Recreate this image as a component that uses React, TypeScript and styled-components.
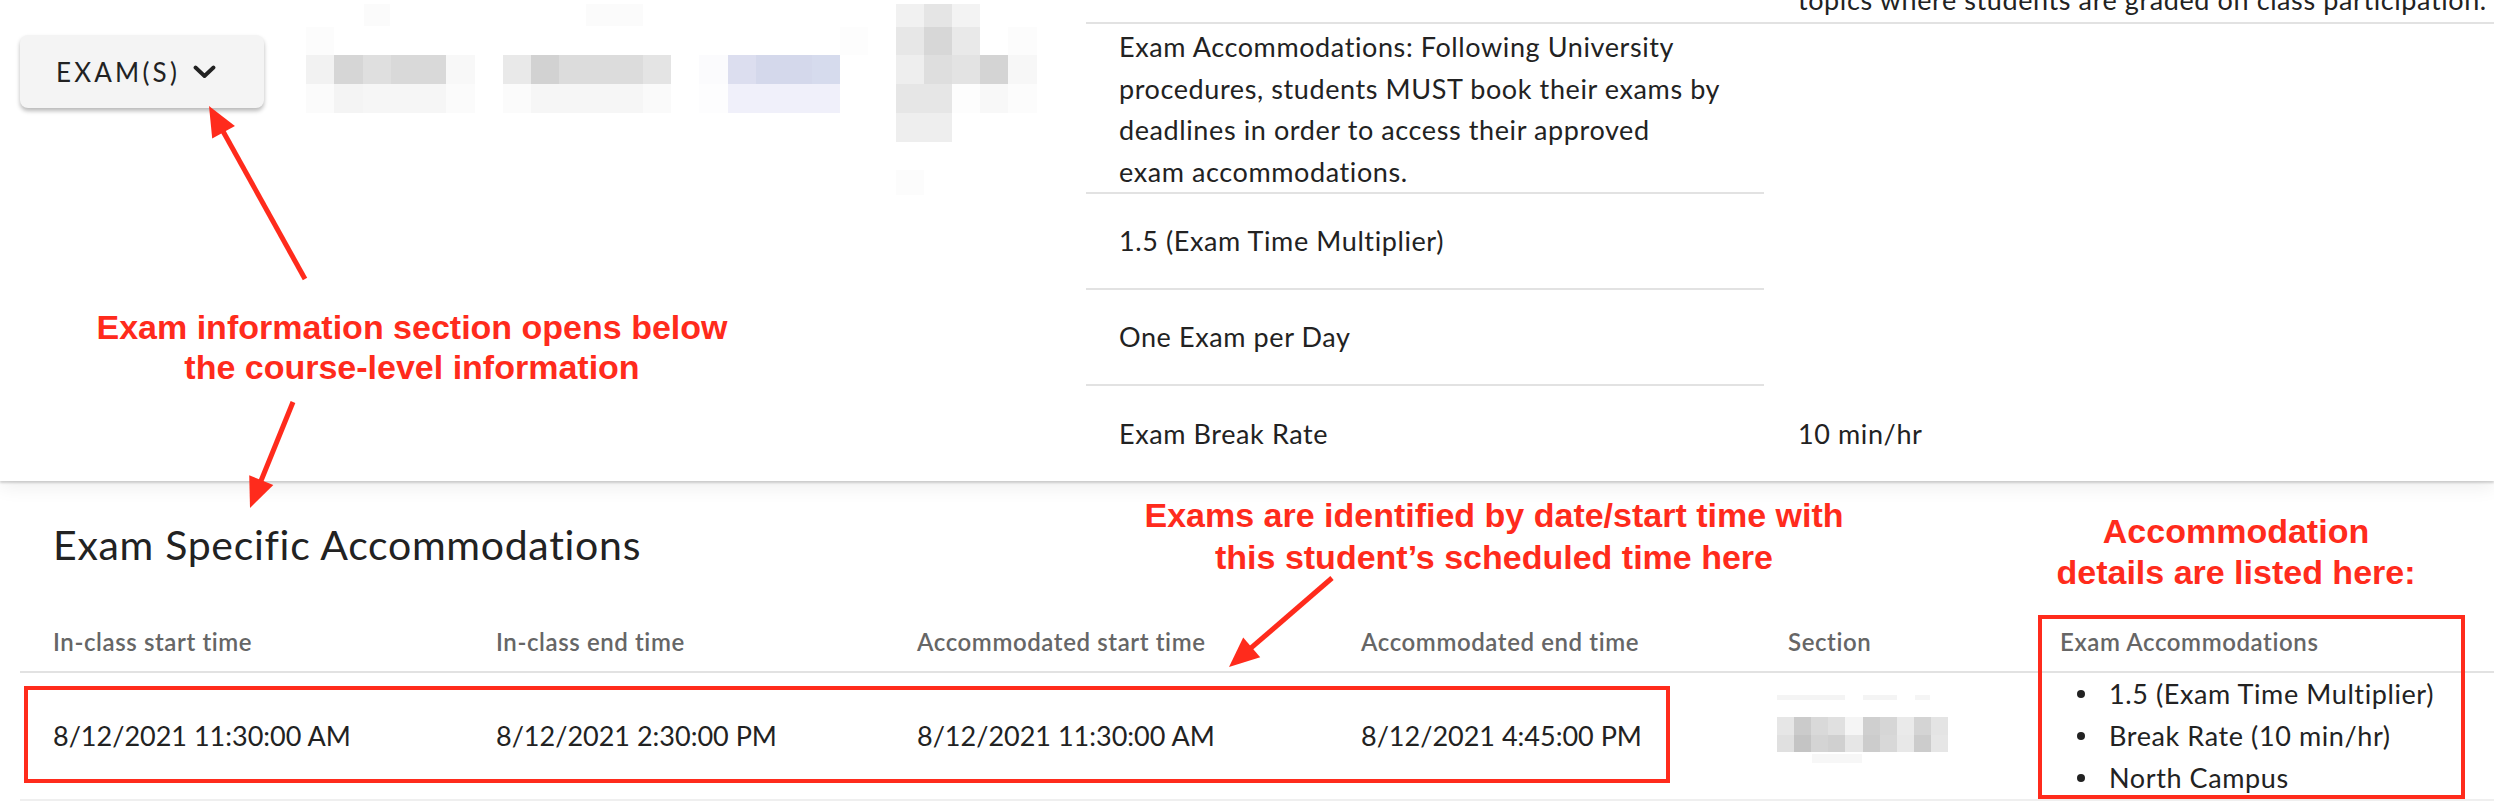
import React from 'react';
import styled, { createGlobalStyle } from 'styled-components';

const GlobalStyle = createGlobalStyle`
  html, body {
    margin: 0;
    padding: 0;
    background: #ffffff;
  }
  body {
    font-family: Lato, "Open Sans", "Liberation Sans", sans-serif;
    color: #222222;
  }
`;

const RED = '#ff2b1c';

const Page = styled.div`
  position: relative;
  width: 2494px;
  height: 804px;
  overflow: hidden;
  background: #ffffff;
`;

/* ---------- top panel (course level info) ---------- */

const TopPanel = styled.div`
  position: relative;
  z-index: 1;
  display: flex;
  height: 481px;
  background: #ffffff;
  box-shadow: 0 2px 2px rgba(0, 0, 0, 0.16), 0 6px 18px rgba(0, 0, 0, 0.07);
`;

const LeftPane = styled.div`
  display: flex;
  align-items: flex-start;
  width: 1086px;
  flex: none;
`;

const ExamButton = styled.button`
  display: flex;
  align-items: center;
  gap: 13px;
  margin: 35px 0 0 20px;
  width: 244px;
  height: 73px;
  padding: 0 0 0 36px;
  border: none;
  border-radius: 8px;
  background: #f4f4f4;
  box-shadow: 0 3px 4px rgba(0, 0, 0, 0.28);
  font-family: Lato, "Open Sans", sans-serif;
  font-size: 26px;
  letter-spacing: 3.2px;
  color: #222222;
  cursor: pointer;
`;

const InfoTable = styled.div`
  flex: 1;
  display: grid;
  grid-template-columns: 678px 1fr;
  grid-template-rows: 24px 170px 96px 96px 95px;
  font-size: 27px;
  letter-spacing: 0.6px;
`;

const InfoCell = styled.div<{ $line?: boolean; $top?: boolean; $col2?: boolean }>`
  box-sizing: border-box;
  display: flex;
  align-items: ${(p) => (p.$top ? 'flex-start' : 'center')};
  padding-left: ${(p) => (p.$col2 ? 34 : 33)}px;
  padding-top: ${(p) => (p.$top ? 2 : 0)}px;
  line-height: ${(p) => (p.$top ? 41.5 : 42)}px;
  border-bottom: ${(p) => (p.$line ? '2px solid #e2e2e2' : 'none')};
  overflow: hidden;
  white-space: nowrap;
`;

// the previous row's text, scrolled mostly out of view at the top
const ClippedCell = styled(InfoCell)`
  align-items: flex-end;
  line-height: 42px;
  & > span {
    margin-bottom: 1px;
  }
`;

/* ---------- exam specific section ---------- */

const ExamSection = styled.section`
  padding: 0 0 0 20px;
`;

const Heading = styled.h2`
  margin: 0;
  padding: 36px 0 0 33px;
  font-size: 41px;
  letter-spacing: 0.7px;
  line-height: 56px;
  font-weight: 400;
  color: #222222;
`;

const ExamTable = styled.div`
  display: grid;
  grid-template-columns: 443px 421px 444px 427px 272px 1fr;
`;

const HeadCell = styled.div`
  padding: 48px 0 8px 33px;
  font-size: 24px;
  letter-spacing: 0.6px;
  line-height: 42px;
  font-weight: 600;
  color: #666666;
  border-bottom: 2px solid #e2e2e2;
  white-space: nowrap;
`;

const DataCell = styled.div<{ $pad?: number }>`
  display: flex;
  align-items: center;
  min-height: 126px;
  padding-left: ${(p) => (p.$pad ?? 33)}px;
  font-size: 27px;
  line-height: 42px;
  color: #222222;
  border-bottom: 2px solid #efefef;
  white-space: nowrap;
`;

const BulletList = styled.ul`
  margin: 0;
  padding: 0;
  list-style: none;
  align-self: flex-start;
  letter-spacing: 0.6px;
`;

const Bullet = styled.li`
  display: flex;
  align-items: center;
  height: 42px;
  &::before {
    content: '';
    width: 8px;
    height: 8px;
    border-radius: 50%;
    background: #222222;
    margin: 0 24px 0 17px;
  }
`;

/* ---------- annotations lying over the screenshot ---------- */

const Overlay = styled.div`
  position: absolute;
  inset: 0;
  z-index: 5;
  pointer-events: none;
`;

const Callout = styled.div<{ $top: number; $left: number; $width: number; $lh: number }>`
  position: absolute;
  top: ${(p) => p.$top}px;
  left: ${(p) => p.$left}px;
  width: ${(p) => p.$width}px;
  text-align: center;
  font-family: "Liberation Sans", Arial, sans-serif;
  font-weight: 700;
  font-size: 34px;
  line-height: ${(p) => p.$lh}px;
  color: ${RED};
  white-space: nowrap;
`;

const HighlightBox = styled.div<{ $x: number; $y: number; $w: number; $h: number }>`
  position: absolute;
  box-sizing: border-box;
  left: ${(p) => p.$x}px;
  top: ${(p) => p.$y}px;
  width: ${(p) => p.$w}px;
  height: ${(p) => p.$h}px;
  border: 4px solid ${RED};
`;

const ArrowLayer = styled.svg`
  position: absolute;
  inset: 0;
`;

function Chevron() {
  return (
    <svg width="23" height="14" viewBox="0 0 23 14">
      <polyline points="2.5,2.5 11.5,11 20.5,2.5" fill="none" stroke="#222" strokeWidth="3.8" strokeLinecap="round" strokeLinejoin="round" />
    </svg>
  );
}

type Cell = [number, number, number, number, string];

// pixelated (redacted) course details next to the button
const courseMosaic: Cell[] = [
  [364, 4, 26, 22, '#fbfbfb'], [586, 4, 57, 22, '#fbfbfb'], [306, 27, 28, 28, '#fcfcfc'], [840, 27, 28, 28, '#fdfdfd'],
  [306, 55, 28, 29, '#f2f2f2'], [334, 55, 29, 29, '#d6d6d6'], [363, 55, 28, 29, '#dfdfdf'], [391, 55, 55, 29, '#d9d9d9'], [446, 55, 29, 29, '#f8f8f8'],
  [306, 84, 28, 29, '#fbfbfb'], [334, 84, 29, 29, '#f4f4f4'], [363, 84, 83, 29, '#f6f6f6'], [446, 84, 29, 29, '#fbfbfb'],
  [503, 55, 28, 29, '#e9e9e9'], [531, 55, 28, 29, '#d2d2d2'], [559, 55, 84, 29, '#dcdcdc'], [643, 55, 28, 29, '#e4e4e4'],
  [503, 84, 28, 29, '#fbfbfb'], [531, 84, 112, 29, '#f6f6f6'], [643, 84, 28, 29, '#fafafa'],
  [699, 55, 29, 29, '#fbfbfd'], [728, 55, 28, 29, '#dcdeef'], [756, 55, 56, 29, '#d4d8eb'], [812, 55, 28, 29, '#d6dbed'],
  [699, 84, 29, 29, '#fdfdfe'], [728, 84, 112, 29, '#f0f0fa'],
  [896, 4, 28, 23, '#f1f1f1'], [924, 4, 28, 23, '#e5e5e5'], [952, 4, 28, 23, '#f3f3f3'],
  [896, 27, 28, 28, '#e7e7e7'], [924, 27, 28, 28, '#d7d7d7'], [952, 27, 28, 28, '#e9e9e9'], [1008, 27, 29, 28, '#fcfcfc'],
  [896, 55, 28, 29, '#eeeeee'], [924, 55, 28, 29, '#dedede'], [952, 55, 28, 29, '#e3e3e3'], [980, 55, 28, 29, '#d4d4d4'], [1008, 55, 29, 29, '#f7f7f7'],
  [896, 84, 56, 29, '#e6e6e6'], [952, 84, 28, 29, '#fdfdfd'], [980, 84, 28, 29, '#f8f8f8'], [1008, 84, 29, 29, '#fcfcfc'],
  [896, 113, 56, 29, '#eeeeee'], [896, 170, 28, 25, '#fcfcfc'],
];

const sectionRow1 = ['#e6e6e6', '#cbcbcb', '#d9d9d9', '#e0e0e0', '#f5f5f5', '#cfcfcf', '#d6d6d6', '#eaeaea', '#d4d4d4', '#e4e4e4'];
const sectionRow2 = ['#e0e0e0', '#c4c4c4', '#d4d4d4', '#d0d0d0', '#e6e6e6', '#cccccc', '#d8d8d8', '#e8e8e8', '#cccccc', '#e6e6e6'];

const sectionMosaic: Cell[] = [
  [1777, 697, 68, 5, '#f4f4f4'], [1863, 697, 34, 5, '#f4f4f4'], [1915, 697, 15, 5, '#f5f5f5'],
  ...sectionRow1.map((c, i): Cell => [1777 + i * 17.1, 719, 17.2, 18, c]),
  ...sectionRow2.map((c, i): Cell => [1777 + i * 17.1, 737, 17.2, 17, c]),
  [1812, 756, 50, 9, '#f7f7f7'],
];

function Mosaic({ cells, viewBox, width, height, style }: { cells: Cell[]; viewBox: string; width: number; height: number; style?: React.CSSProperties }) {
  return (
    <svg width={width} height={height} viewBox={viewBox} shapeRendering="crispEdges" style={style}>
      {cells.map(([x, y, w, h, c], i) => (
        <rect key={i} x={x} y={y} width={w} height={h} fill={c} />
      ))}
    </svg>
  );
}

function Arrow({ from, to }: { from: [number, number]; to: [number, number] }) {
  const [x1, y1] = from;
  const [x2, y2] = to;
  const len = Math.hypot(x2 - x1, y2 - y1);
  const ux = (x2 - x1) / len;
  const uy = (y2 - y1) / len;
  const head = 30;
  const half = 13;
  const bx = x2 - ux * head;
  const by = y2 - uy * head;
  const pts = `${x2},${y2} ${bx - uy * half},${by + ux * half} ${bx + uy * half},${by - ux * half}`;
  return (
    <g>
      <line x1={x1} y1={y1} x2={bx + ux * 2} y2={by + uy * 2} stroke={RED} strokeWidth={5} />
      <polygon points={pts} fill={RED} />
    </g>
  );
}

const headers = [
  'In-class start time',
  'In-class end time',
  'Accommodated start time',
  'Accommodated end time',
  'Section',
  'Exam Accommodations',
];

export default function App() {
  return (
    <Page>
      <GlobalStyle />
      <TopPanel>
        <LeftPane>
          <ExamButton>
            EXAM(S) <Chevron />
          </ExamButton>
          <Mosaic cells={courseMosaic} viewBox="300 0 745 200" width={745} height={200} style={{ marginLeft: 36 }} />
        </LeftPane>
        <InfoTable>
          <InfoCell $line />
          <ClippedCell $line $col2>
            <span>topics where students are graded on class participation.</span>
          </ClippedCell>

          <InfoCell $line $top>
            <span>
              Exam Accommodations: Following University
              <br />
              procedures, students MUST book their exams by
              <br />
              deadlines in order to access their approved
              <br />
              exam accommodations.
            </span>
          </InfoCell>
          <InfoCell $col2 />

          <InfoCell $line>1.5 (Exam Time Multiplier)</InfoCell>
          <InfoCell $col2 />

          <InfoCell $line>One Exam per Day</InfoCell>
          <InfoCell $col2 />

          <InfoCell>Exam Break Rate</InfoCell>
          <InfoCell $col2>10 min/hr</InfoCell>
        </InfoTable>
      </TopPanel>

      <ExamSection>
        <Heading>Exam Specific Accommodations</Heading>
        <ExamTable>
          {headers.map((h) => (
            <HeadCell key={h}>{h}</HeadCell>
          ))}
          <DataCell>8/12/2021 11:30:00 AM</DataCell>
          <DataCell>8/12/2021 2:30:00 PM</DataCell>
          <DataCell>8/12/2021 11:30:00 AM</DataCell>
          <DataCell>8/12/2021 4:45:00 PM</DataCell>
          <DataCell $pad={22}>
            <Mosaic cells={sectionMosaic} viewBox="1777 695 172 70" width={172} height={70} style={{ marginBottom: 16 }} />
          </DataCell>
          <DataCell $pad={33}>
            <BulletList>
              <Bullet>1.5 (Exam Time Multiplier)</Bullet>
              <Bullet>Break Rate (10 min/hr)</Bullet>
              <Bullet>North Campus</Bullet>
            </BulletList>
          </DataCell>
        </ExamTable>
      </ExamSection>

      <Overlay>
        <Callout $top={307} $left={62} $width={700} $lh={40}>
          Exam information section opens below
          <br />
          the course-level information
        </Callout>
        <Callout $top={494} $left={1094} $width={800} $lh={42}>
          Exams are identified by date/start time with
          <br />
          this student’s scheduled time here
        </Callout>
        <Callout $top={511} $left={1986} $width={500} $lh={41}>
          Accommodation
          <br />
          details are listed here:
        </Callout>
        <HighlightBox $x={24} $y={686} $w={1646} $h={97} />
        <HighlightBox $x={2038} $y={615} $w={427} $h={184} />
        <ArrowLayer width="2494" height="804" viewBox="0 0 2494 804">
          <Arrow from={[305, 279]} to={[209, 106]} />
          <Arrow from={[293, 402]} to={[250, 508]} />
          <Arrow from={[1332, 578]} to={[1229, 667]} />
        </ArrowLayer>
      </Overlay>
    </Page>
  );
}
